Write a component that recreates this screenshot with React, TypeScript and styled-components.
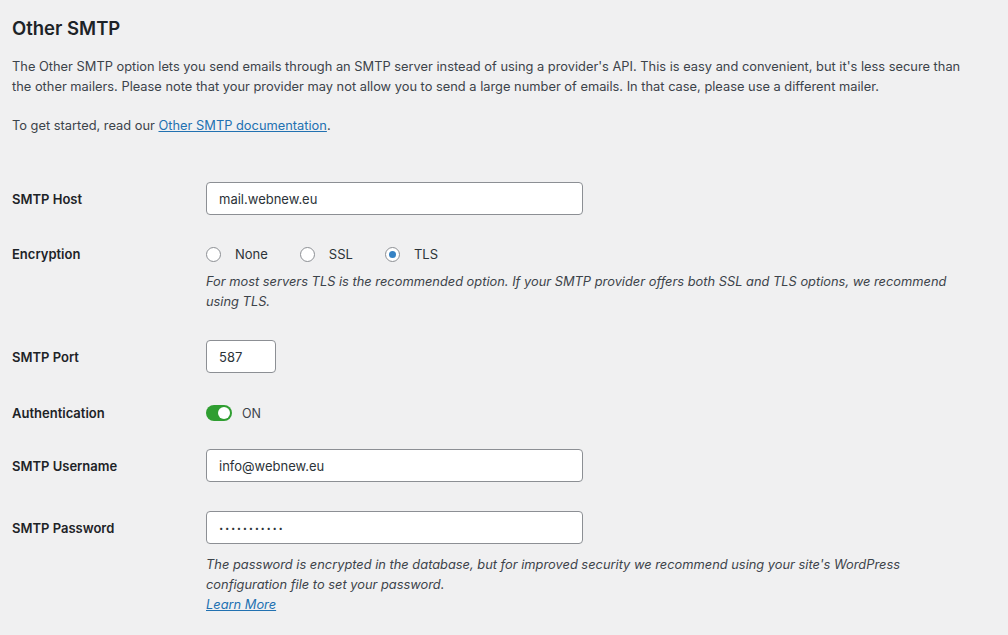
import React from "react"
import styled, { createGlobalStyle } from "styled-components"

const GlobalStyle = createGlobalStyle`
    html, body {
        margin: 0;
        padding: 0;
        background: #f0f0f1;
    }
    body {
        font-family: Inter, "Noto Sans", sans-serif;
        color: #3c434a;
    }
`;

const App: React.FC = () => {
    return (
        <Page>
            <GlobalStyle />
            <Title>Other SMTP</Title>
            <Intro>
                The Other SMTP option lets you send emails through an SMTP server instead of using a provider's API. This is easy and convenient, but it's less secure than the other mailers. Please note that your provider may not allow you to send a large number of emails. In that case, please use a different mailer.
            </Intro>
            <Intro>
                To get started, read our <Link href="#">Other SMTP documentation</Link>.
            </Intro>

            <Form>
                <Row $mt={0}>
                    <Label $h={33}>SMTP Host</Label>
                    <Field>
                        <TextInput $w={377} defaultValue="mail.webnew.eu" />
                    </Field>
                </Row>

                <Row>
                    <Label $h={20}>Encryption</Label>
                    <Field>
                        <RadioLine>
                            <RadioOption>
                                <Radio />
                                None
                            </RadioOption>
                            <RadioOption>
                                <Radio />
                                SSL
                            </RadioOption>
                            <RadioOption>
                                <Radio $checked />
                                TLS
                            </RadioOption>
                        </RadioLine>
                        <Description>
                            For most servers TLS is the recommended option. If your SMTP provider offers both SSL and TLS options, we recommend using TLS.
                        </Description>
                    </Field>
                </Row>

                <Row $mt={28}>
                    <Label $h={33}>SMTP Port</Label>
                    <Field>
                        <TextInput $w={70} defaultValue="587" />
                    </Field>
                </Row>

                <Row $mt={30}>
                    <Label $h={20}>Authentication</Label>
                    <Field>
                        <ToggleLine>
                            <Toggle>
                                <Knob />
                            </Toggle>
                            ON
                        </ToggleLine>
                    </Field>
                </Row>

                <Row $mt={26}>
                    <Label $h={33}>SMTP Username</Label>
                    <Field>
                        <TextInput $w={377} defaultValue="info@webnew.eu" />
                    </Field>
                </Row>

                <Row>
                    <Label $h={33}>SMTP Password</Label>
                    <Field>
                        <TextInput $w={377} $dots defaultValue="···········" />
                        <Description $mt={11}>
                            The password is encrypted in the database, but for improved security we recommend using your site's WordPress configuration file to set your password.
                            <br />
                            <Link href="#">Learn More</Link>
                        </Description>
                    </Field>
                </Row>
            </Form>
        </Page>
    )
}

const Page = styled.div`
    padding: 16px 12px 20px 12px;
    width: 975px;
`;

const Title = styled.h2`
    margin: 0 0 16px 0;
    font-size: 18.5px;
    line-height: 25px;
    font-weight: 600;
    color: #1d2327;
`;

const Intro = styled.p`
    margin: 0 0 19px 0;
    max-width: 952px;
    font-size: 12.85px;
    line-height: 20px;
    color: #3c434a;
`;

const Link = styled.a`
    color: #2271b1;
    text-decoration: underline;
`;

const Form = styled.div`
    display: flex;
    flex-direction: column;
    margin-top: 46px;
`;

const Row = styled.div<{ $mt?: number }>`
    display: grid;
    grid-template-columns: 194px 1fr;
    align-items: start;
    margin-top: ${p => p.$mt ?? 29}px;
`;

const Label = styled.div<{ $h: number }>`
    display: flex;
    align-items: center;
    height: ${p => p.$h}px;
    font-size: 13px;
    font-weight: 600;
    color: #1d2327;
`;

const Field = styled.div`
    display: flex;
    flex-direction: column;
    align-items: flex-start;
`;

const TextInput = styled.input<{ $w: number; $dots?: boolean }>`
    box-sizing: border-box;
    width: ${p => p.$w}px;
    height: 33px;
    padding: 0 12px;
    border: 1px solid #8c8f94;
    border-radius: 4px;
    background: #fff;
    font-family: Inter, "Noto Sans", sans-serif;
    font-size: 13px;
    color: #2c3338;
    letter-spacing: ${p => (p.$dots ? "1.6px" : "0")};
    font-weight: ${p => (p.$dots ? 700 : 400)};
    outline: none;
`;

const RadioLine = styled.div`
    display: flex;
    align-items: center;
    height: 20px;
    gap: 32px;
`;

const RadioOption = styled.label`
    display: flex;
    align-items: center;
    gap: 14px;
    font-size: 13px;
    color: #2c3338;
`;

const Radio = styled.span<{ $checked?: boolean }>`
    box-sizing: border-box;
    width: 15px;
    height: 15px;
    border-radius: 50%;
    border: 1px solid #8c8f94;
    background: #fff;
    display: flex;
    align-items: center;
    justify-content: center;

    &::after {
        content: "";
        display: ${p => (p.$checked ? "block" : "none")};
        width: 7px;
        height: 7px;
        border-radius: 50%;
        background: #3582c4;
    }
`;

const Description = styled.p<{ $mt?: number }>`
    margin: ${p => p.$mt ?? 8}px 0 0 0;
    font-size: 12.85px;
    line-height: 20px;
    font-style: italic;
    color: #3c434a;
    max-width: 755px;
`;

const ToggleLine = styled.div`
    display: flex;
    align-items: center;
    gap: 10px;
    height: 20px;
    font-size: 12.5px;
    color: #3c434a;
`;

const Toggle = styled.span`
    position: relative;
    width: 26px;
    height: 16px;
    border-radius: 8px;
    background: #2f9e31;
`;

const Knob = styled.span`
    position: absolute;
    top: 2px;
    right: 2px;
    width: 12px;
    height: 12px;
    border-radius: 50%;
    background: #fff;
`;

export default App
